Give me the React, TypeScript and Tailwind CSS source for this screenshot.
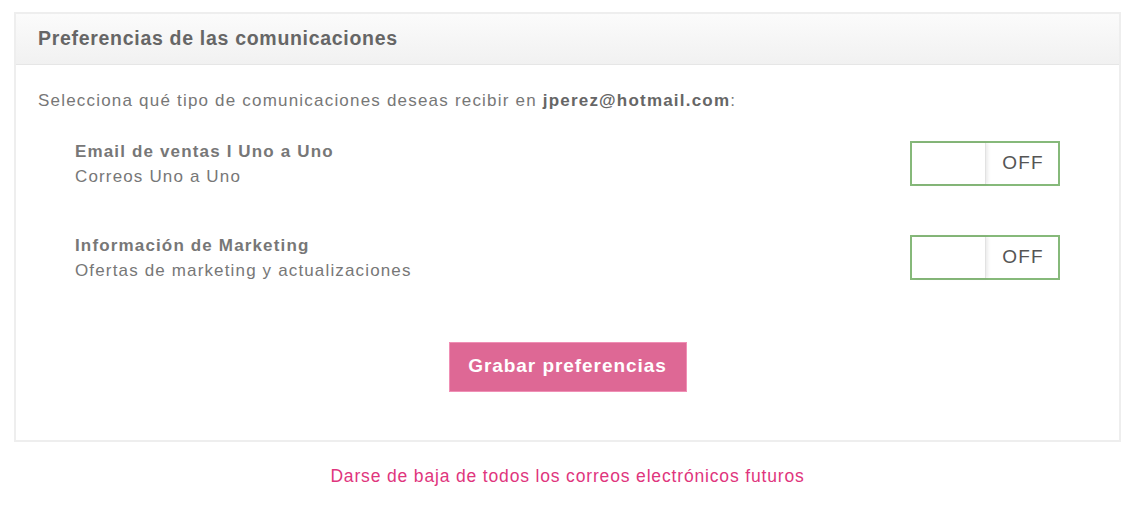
import React from 'react';

const items = [
  { title: 'Email de ventas I Uno a Uno', sub: 'Correos Uno a Uno' },
  { title: 'Información de Marketing', sub: 'Ofertas de marketing y actualizaciones' },
];

function Toggle() {
  return (
    <div className="flex h-[45px] w-[150px] border-2 border-[#86b97a] bg-white">
      <div className="w-[74px] border-r border-[#e2e2e2] shadow-[2px_0_3px_rgba(0,0,0,0.08)]" />
      <div className="flex flex-1 items-center justify-center pl-[2px] text-[19px] tracking-[1.2px] text-[#555]">OFF</div>
    </div>
  );
}

export default function App() {
  return (
    <div
      className="min-h-[522px] bg-white pl-[14px] pr-[25px] pt-[12px]"
      style={{ fontFamily: '"Liberation Sans", Arial, sans-serif' }}
    >
      <div className="border-2 border-[#eeeeee]">
        <div className="flex h-[51px] items-center border-b border-[#e6e6e6] bg-gradient-to-b from-[#fbfbfb] to-[#f1f1f1] px-[22px]">
          <h2 className="text-[19.5px] font-bold tracking-[0.7px] text-[#666]">Preferencias de las comunicaciones</h2>
        </div>

        <div className="px-[22px] pt-[23px] pb-[48px]">
          <p className="text-[17px] tracking-[1.2px] text-[#777]">
            Selecciona qué tipo de comunicaciones deseas recibir en{' '}
            <span className="font-bold text-[#666]">jperez@hotmail.com</span>:
          </p>

          <div className="mt-[25px] flex flex-col gap-[44px] pl-[37px] pr-[37px]">
            {items.map((item) => (
              <div key={item.title} className="flex items-center justify-between">
                <div className="text-[17px] leading-[25px] tracking-[1.15px] text-[#777]">
                  <div className="font-bold">{item.title}</div>
                  <div>{item.sub}</div>
                </div>
                <Toggle />
              </div>
            ))}
          </div>

          <div className="mt-[59px] flex justify-center">
            <button className="h-[50px] w-[238px] border border-[#f08fb5] bg-[#de6895] text-[19px] font-bold tracking-[0.95px] text-white">
              Grabar preferencias
            </button>
          </div>
        </div>
      </div>

      <div className="mt-[21px] text-center">
        <a className="text-[17.5px] tracking-[0.84px] text-[#e0357d]">Darse de baja de todos los correos electrónicos futuros</a>
      </div>
    </div>
  );
}
